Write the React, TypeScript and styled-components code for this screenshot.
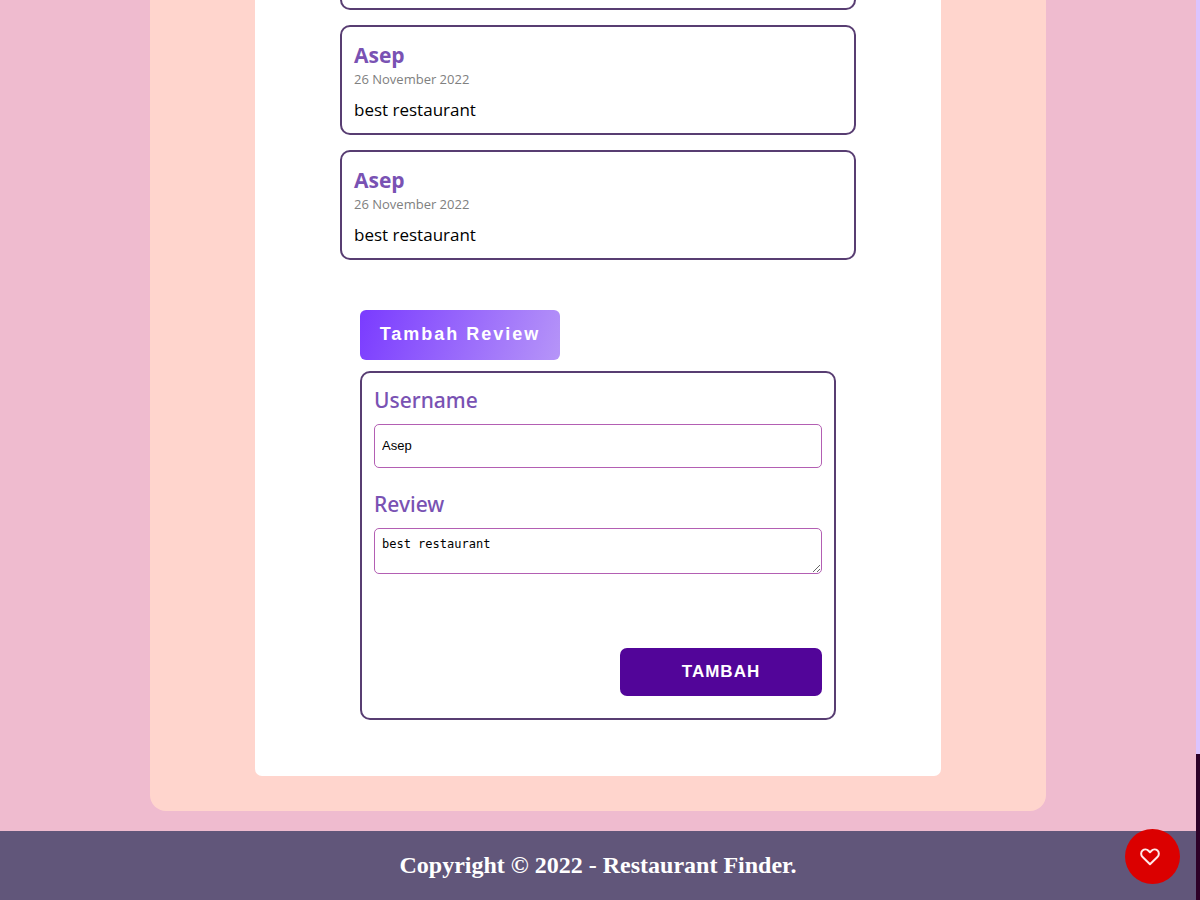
import React, { useState } from "react";
import styled, { createGlobalStyle } from "styled-components";

const GlobalStyle = createGlobalStyle`
  *, *::before, *::after { box-sizing: border-box; }
  body { margin: 0; background: #efbbcf; color: #000; }
  h2, p { margin: 0; }
`;

const sans = `"Segoe UI", "Open Sans", sans-serif`;
const labelSans = `"Segoe UI", "Noto Sans", sans-serif`;
const arial = `"Liberation Sans", Arial, sans-serif`;

const Page = styled.div`
  min-height: 100vh;
  display: grid;
  grid-template-columns: minmax(0, 1fr) 4px;
`;

const Content = styled.div`
  display: flex;
  flex-direction: column;
`;

const ScrollTrack = styled.div`
  display: flex;
  flex-direction: column;
  justify-content: flex-end;
  background: #dcc4ff;
`;

const ScrollThumb = styled.div`
  height: 146px;
  background: #2d0028;
`;

const Main = styled.main`
  margin: 0 150px 20px;
  padding: 0 105px 35px;
  background: #ffd5cd;
  border-radius: 0 0 16px 16px;
`;

const Panel = styled.section`
  padding: 0 85px 56px;
  background: #fff;
  border-radius: 0 0 7px 7px;
`;

const ReviewList = styled.div`
  display: flex;
  flex-direction: column;
  gap: 15px;
`;

const ReviewCard = styled.article`
  height: 110px;
  padding: 13px 12px 0;
  border: 2px solid #583d72;
  border-radius: 10px;
`;

const ReviewCardEnd = styled.div`
  height: 10px;
  border: 2px solid #583d72;
  border-top: 0;
  border-radius: 0 0 10px 10px;
`;

const ReviewName = styled.h2`
  font: 700 21px/30px ${sans};
  color: #7952b3;
`;

const ReviewDate = styled.p`
  font: 400 13px/18px ${sans};
  color: #808080;
`;

const ReviewText = styled.p`
  margin-top: 10px;
  font: 400 17px/24px ${sans};
`;

const AddReview = styled.section`
  margin-top: 50px;
  padding: 0 20px;
`;

const ToggleButton = styled.button`
  display: block;
  width: 200px;
  height: 50px;
  padding: 0 0 2px;
  border: 0;
  border-radius: 6px;
  background: linear-gradient(110deg, #7a3bff, #b695f8);
  color: #fff;
  font: 700 18px/24px ${arial};
  letter-spacing: 2px;
`;

const Form = styled.form`
  display: flex;
  flex-direction: column;
  margin-top: 11px;
  padding: 11px 12px 22px;
  border: 2px solid #583d72;
  border-radius: 10px;
`;

const Label = styled.label`
  font: 500 21px/32px ${labelSans};
  color: #7952b3;
`;

const TextInput = styled.input`
  height: 44px;
  margin: 8px 0 20px;
  padding: 0 7px 2px;
  border: 1px solid #b35fb3;
  border-radius: 5px;
  font: 400 13px/16px ${arial};
`;

const TextArea = styled.textarea`
  height: 46px;
  margin-top: 8px;
  padding: 7px;
  border: 1px solid #b35fb3;
  border-radius: 5px;
  font: 400 12px/16px "DejaVu Sans Mono", monospace;
  overflow: hidden;
  resize: both;
`;

const SubmitButton = styled.button`
  align-self: flex-end;
  width: 202px;
  height: 48px;
  margin-top: 74px;
  padding: 0;
  border: 0;
  border-radius: 7px;
  background: #520599;
  color: #fff;
  font: 700 17px/24px ${arial};
  letter-spacing: 1px;
`;

const Footer = styled.footer`
  flex: 1;
  min-height: 69px;
  padding: 20px;
  background: #61567a;
  color: #fff;
  text-align: center;
  font: 700 24px/28px "Liberation Serif", "Times New Roman", serif;
`;

const LikeButton = styled.button`
  position: fixed;
  right: 20px;
  bottom: 16px;
  width: 55px;
  height: 55px;
  padding: 0 5px 0 0;
  display: grid;
  place-items: center;
  border: 0;
  border-radius: 50%;
  background: #db0000;
  color: #fff;
`;

const reviews = [
  { id: 1, name: "Asep", date: "26 November 2022", text: "best restaurant" },
  { id: 2, name: "Asep", date: "26 November 2022", text: "best restaurant" },
];

function Heart() {
  return (
    <svg width="20" height="18" viewBox="0 0 20 18" fill="none" stroke="#ffe9e9" strokeWidth="2" strokeLinejoin="round" aria-hidden="true">
      <path d="M10 16.2 2.6 9C0.7 7.1 0.7 4.2 2.5 2.6C4.3 1 6.9 1.1 8.5 2.8L10 4.3L11.5 2.8C13.1 1.1 15.7 1 17.5 2.6C19.3 4.2 19.3 7.1 17.4 9Z" />
    </svg>
  );
}

export default function App() {
  const [name, setName] = useState("Asep");
  const [review, setReview] = useState("best restaurant");

  return (
    <>
      <GlobalStyle />
      <Page>
        <Content>
          <Main>
            <Panel>
              <ReviewList>
                <ReviewCardEnd />
                {reviews.map((r) => (
                  <ReviewCard key={r.id}>
                    <ReviewName>{r.name}</ReviewName>
                    <ReviewDate>{r.date}</ReviewDate>
                    <ReviewText>{r.text}</ReviewText>
                  </ReviewCard>
                ))}
              </ReviewList>
              <AddReview>
                <ToggleButton type="button">Tambah Review</ToggleButton>
                <Form onSubmit={(e) => e.preventDefault()}>
                  <Label htmlFor="username">Username</Label>
                  <TextInput id="username" value={name} onChange={(e) => setName(e.target.value)} />
                  <Label htmlFor="review">Review</Label>
                  <TextArea id="review" value={review} onChange={(e) => setReview(e.target.value)} />
                  <SubmitButton type="submit">TAMBAH</SubmitButton>
                </Form>
              </AddReview>
            </Panel>
          </Main>
          <Footer>Copyright © 2022 - Restaurant Finder.</Footer>
        </Content>
        <ScrollTrack>
          <ScrollThumb />
        </ScrollTrack>
      </Page>
      <LikeButton type="button" aria-label="Like this restaurant">
        <Heart />
      </LikeButton>
    </>
  );
}
